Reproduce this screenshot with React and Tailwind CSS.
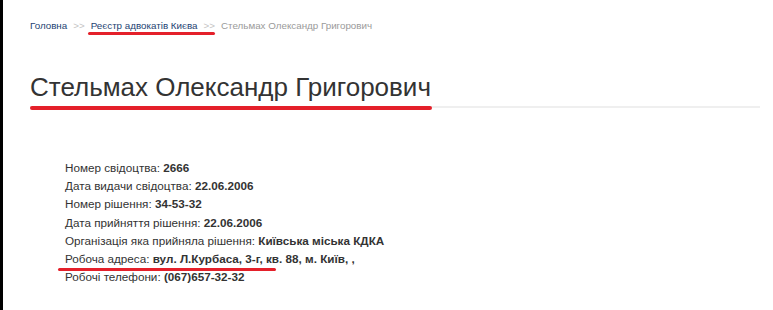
export default function App() {
  const rows = [
    ["Номер свідоцтва: ", "2666"],
    ["Дата видачи свідоцтва: ", "22.06.2006"],
    ["Номер рішення: ", "34-53-32"],
    ["Дата прийняття рішення: ", "22.06.2006"],
    ["Організація яка прийняла рішення: ", "Київська міська КДКА"],
    ["Робоча адреса: ", "вул. Л.Курбаса, 3-г, кв. 88, м. Київ, ,"],
    ["Робочі телефони: ", "(067)657-32-32"],
  ];
  return (
    <div className="relative w-[773px] h-[310px] overflow-hidden bg-white border-l-[3px] border-black" style={{ fontFamily: '"Liberation Sans", Arial, sans-serif' }}>
      <div className="pl-[27px] pt-[19px] text-[9.8px] leading-[13px] flex gap-[6px]">
        <span className="text-[#1d3f72]">Головна</span>
        <span className="text-[#c4c4c4]">&gt;&gt;</span>
        <span className="text-[#1d3f72]">Реєстр адвокатів Києва</span>
        <span className="text-[#c4c4c4]">&gt;&gt;</span>
        <span className="text-[#9a9a9a]">Стельмах Олександр Григорович</span>
      </div>
      <div className="ml-[27px] mr-[13px] mt-[40px] border-b-2 border-[#efefef]">
        <h1 className="text-[26px] leading-[30px] text-[#333] pb-[4px]">Стельмах Олександр Григорович</h1>
      </div>
      <div className="pl-[62px] pt-[51px] text-[11.7px] leading-[18.2px] text-[#333]">
        {rows.map(([k, v]) => (
          <div key={k}>
            {k}
            <b>{v}</b>
          </div>
        ))}
      </div>
      <div className="absolute left-[85px] top-[32px] w-[127px] h-[3px] rounded-full bg-[#e4202a]" />
      <div className="absolute left-[27px] top-[106px] w-[402px] h-[4px] rounded-full bg-[#e4202a]" />
      <div className="absolute left-[55px] top-[268px] w-[218px] h-[3px] rounded-full bg-[#e4202a]" />
    </div>
  );
}
